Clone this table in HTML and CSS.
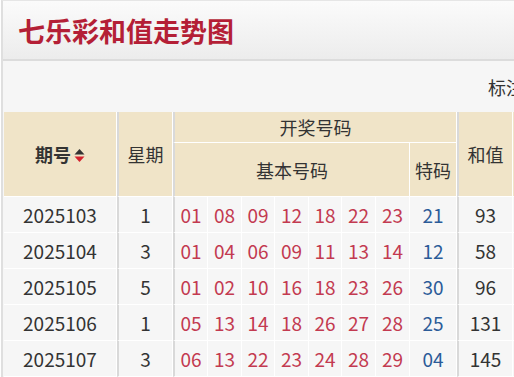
FILE: index.html
```html
<!DOCTYPE html>
<html lang="zh-CN">
<head>
<meta charset="utf-8">
<title>七乐彩和值走势图</title>
<link rel="stylesheet" href="styles.css">
</head>
<body>
<div class="page">
  <header class="titlebar"><h1 class="title">七乐彩和值走势图</h1></header>
  <div class="toolbar"><span class="tool-label">标注</span></div>
  <table class="trend">
    <colgroup>
      <col class="w-issue"><col class="w-week"><col class="w-num1">
      <col class="w-num"><col class="w-num-s"><col class="w-num"><col class="w-num-s"><col class="w-num"><col class="w-num">
      <col class="w-spec"><col class="w-sum"><col class="w-more">
    </colgroup>
    <thead>
      <tr class="h1">
        <th rowspan="2" class="issue-h">期号<span class="sort"><svg width="11" height="15" viewBox="0 0 11 15"><path d="M5.5 1 L10.5 6.5 L0.5 6.5 Z" fill="#333"/><path d="M0.5 8.5 L10.5 8.5 L5.5 14 Z" fill="#d3232e"/></svg></span></th>
        <th rowspan="2" class="sep">星期</th>
        <th colspan="8" class="sep">开奖号码</th>
        <th rowspan="2" class="sep">和值</th>
        <th rowspan="2">&nbsp;</th>
      </tr>
      <tr class="h2">
        <th colspan="7" class="sep">基本号码</th>
        <th>特码</th>
      </tr>
    </thead>
    <tbody>
      <tr><td>2025103</td><td class="sep">1</td><td class="r sep">01</td><td class="r">08</td><td class="r">09</td><td class="r">12</td><td class="r">18</td><td class="r">22</td><td class="r">23</td><td class="b">21</td><td class="sep">93</td><td></td></tr>
      <tr><td>2025104</td><td class="sep">3</td><td class="r sep">01</td><td class="r">04</td><td class="r">06</td><td class="r">09</td><td class="r">11</td><td class="r">13</td><td class="r">14</td><td class="b">12</td><td class="sep">58</td><td></td></tr>
      <tr><td>2025105</td><td class="sep">5</td><td class="r sep">01</td><td class="r">02</td><td class="r">10</td><td class="r">16</td><td class="r">18</td><td class="r">23</td><td class="r">26</td><td class="b">30</td><td class="sep">96</td><td></td></tr>
      <tr><td>2025106</td><td class="sep">1</td><td class="r sep">05</td><td class="r">13</td><td class="r">14</td><td class="r">18</td><td class="r">26</td><td class="r">27</td><td class="r">28</td><td class="b">25</td><td class="sep">131</td><td></td></tr>
      <tr><td>2025107</td><td class="sep">3</td><td class="r sep">06</td><td class="r">13</td><td class="r">22</td><td class="r">23</td><td class="r">24</td><td class="r">28</td><td class="r">29</td><td class="b">04</td><td class="sep">145</td><td></td></tr>
    </tbody>
  </table>
</div>
</body>
</html>
```
FILE: styles.css
```css
html, body {
  margin: 0;
  padding: 0;
  background: #ffffff;
  overflow: hidden;
}
body {
  font-family: "Noto Sans CJK SC", "Noto Sans", sans-serif;
  color: #333;
}
.page {
  width: 900px;
  margin-left: 1px;
  border-left: 2px solid #dfdfdf;
  border-top: 1px solid #e6e6e6;
  background: #f6f6f6;
}
.titlebar {
  height: 58px;
  display: flex;
  align-items: center;
  padding-left: 15px;
  background: linear-gradient(#fbfbfb, #ececec);
  border-bottom: 2px solid #dcdcdc;
}
.title {
  margin: 0;
  font-size: 27px;
  font-weight: bold;
  color: #b41f36;
}
.toolbar {
  height: 51px;
  display: flex;
  align-items: center;
  padding-left: 485px;
  background: #f6f6f6;
}
.tool-label {
  font-size: 18px;
  color: #333;
}
.trend {
  border-collapse: separate;
  border-spacing: 0;
  table-layout: fixed;
  width: 616px;
  margin-left: 1px;
  font-size: 18px;
}
.w-issue { width: 113px; }
.w-week { width: 56px; }
.w-num1 { width: 35px; }
.w-num { width: 34px; }
.w-num-s { width: 33px; }
.w-spec { width: 47px; }
.w-sum { width: 56px; }
.w-more { width: 108px; }
.trend th, .trend td {
  padding: 0;
  text-align: center;
  border-right: 1px solid #fff;
  border-bottom: 1px solid #fff;
  white-space: nowrap;
  overflow: hidden;
}
.trend th {
  background: #f0e4c8;
  font-weight: normal;
  color: #333;
}
.trend .sep {
  border-left: 2px solid #d9d9d9;
}
.h1 th { height: 30px; }
.h2 th { height: 53px; }
.issue-h {
  font-weight: bold !important;
}
.sort {
  display: inline-block;
  vertical-align: -1px;
  margin-left: 3px;
}
.sort svg { display: block; }
.trend td {
  height: 35px;
  background: #f6f6f6;
  color: #333;
  font-size: 19px;
  line-height: 1;
}
.trend td.r { color: #c33a50; }
.trend td.b { color: #2b5b98; }
```
